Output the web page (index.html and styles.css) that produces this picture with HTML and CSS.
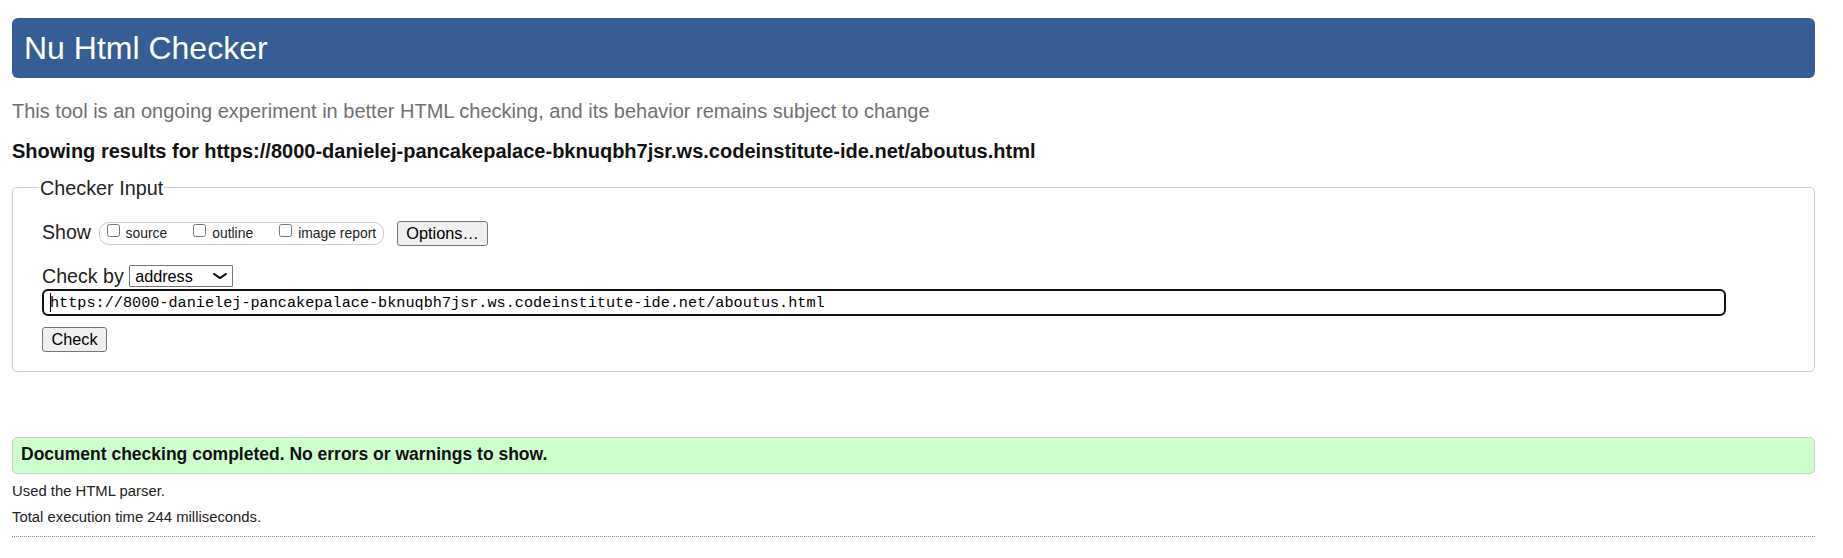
FILE: index.html
```html
<!DOCTYPE html>
<html lang="en">
<head>
<meta charset="utf-8">
<title>Nu Html Checker</title>
<link rel="stylesheet" href="styles.css">
</head>
<body>
<div class="page">
  <h1 class="banner">Nu Html Checker</h1>
  <p class="intro">This tool is an ongoing experiment in better HTML checking, and its behavior remains subject to change</p>
  <p class="results-for">Showing results for https://8000-danielej-pancakepalace-bknuqbh7jsr.ws.codeinstitute-ide.net/aboutus.html</p>
  <form class="checker">
    <fieldset class="checker-fieldset">
      <legend class="checker-legend">Checker Input</legend>
      <div class="row row-show">
        <span class="row-label show-label">Show</span>
        <span class="show-group">
          <label class="opt"><input type="checkbox" class="cb"><span class="opt-text">source</span></label>
          <label class="opt"><input type="checkbox" class="cb"><span class="opt-text">outline</span></label>
          <label class="opt opt-last"><input type="checkbox" class="cb"><span class="opt-text">image report</span></label>
        </span>
        <button type="button" class="btn btn-options">Options…</button>
      </div>
      <div class="row row-checkby">
        <span class="row-label">Check by</span>
        <span class="select-wrap">
          <select class="select"><option>address</option><option>file upload</option><option>text input</option></select>
          <svg class="chevron" width="14" height="6" viewBox="0 0 14 6"><path d="M1 0.9 L7 5.1 L13 0.9" fill="none" stroke="#111" stroke-width="1.9" stroke-linecap="round" stroke-linejoin="round"/></svg>
        </span>
      </div>
      <div class="url-wrap">
        <input class="url" type="text" value="https://8000-danielej-pancakepalace-bknuqbh7jsr.ws.codeinstitute-ide.net/aboutus.html">
        <span class="caret"></span>
      </div>
      <div class="submit-row"><button type="button" class="btn btn-check">Check</button></div>
    </fieldset>
  </form>
  <p class="success">Document checking completed. No errors or warnings to show.</p>
  <p class="meta meta-first">Used the HTML parser.</p>
  <p class="meta">Total execution time 244 milliseconds.</p>
  <hr class="dotted">
</div>
</body>
</html>
```
FILE: styles.css
```css
* { box-sizing: border-box; }
html, body { margin: 0; padding: 0; background: #fff; }
body {
  font-family: "Liberation Sans", Arial, sans-serif;
  color: #222;
}
.page { padding: 18px 28px 0 12px; }

.banner {
  margin: 0;
  height: 60px;
  padding-left: 12px;
  background: #365d95;
  color: #fff;
  border-radius: 6px;
  font-size: 32px;
  font-weight: normal;
  line-height: 60px;
}

.intro {
  margin: 20.5px 0 0;
  font-size: 20px;
  line-height: 24px;
  color: #707070;
}

.results-for {
  margin: 16px 0 0;
  font-size: 20px;
  line-height: 24px;
  font-weight: bold;
  color: #111;
}

.checker { margin: 0; }

.checker-fieldset {
  margin: 14px 0 0;
  min-width: 0;
  padding: 21.5px 29px 19px;
  border: 1px solid #cccccc;
  border-radius: 5px;
}

.checker-legend {
  margin-left: -3px;
  padding: 0 1px;
  font-size: 19.8px;
  line-height: 22px;
  color: #222;
}

.row {
  display: flex;
  align-items: center;
}
.row-show { height: 26px; }
.row-checkby { height: 23px; margin-top: 18px; }

.row-label {
  font-size: 19.6px;
  line-height: 22px;
  color: #222;
}
.show-label { margin-right: 8px; margin-bottom: 2px; }

.show-group {
  display: flex;
  align-items: flex-start;
  height: 23px;
  padding: 0 7px 0 6.5px;
  border: 1px solid #cccccc;
  border-radius: 10px;
}
.opt {
  display: flex;
  align-items: flex-start;
  margin-right: 26px;
}
.opt-last { margin-right: 0; }
.cb {
  width: 13px;
  height: 13px;
  margin: 1.3px 6px 0 0;
}
.opt-text {
  font-size: 13.9px;
  line-height: 21px;
  color: #222;
}

.btn {
  height: 25px;
  padding: 2px 8.5px;
  font-family: "Liberation Sans", Arial, sans-serif;
  font-size: 16.3px;
  line-height: 19px;
  color: #000;
  background: #efefef;
  border: 1px solid #767676;
  border-radius: 3px;
}
.btn-options { margin-left: 12.7px; }

.select-wrap {
  position: relative;
  display: block;
  margin-left: 5.5px;
}
.select {
  display: block;
  -webkit-appearance: none;
  appearance: none;
  width: 104px;
  height: 22px;
  margin: 0;
  padding: 0 0 0 5px;
  font-family: "Liberation Sans", Arial, sans-serif;
  font-size: 16.2px;
  color: #000;
  background: #fff;
  border: 1px solid #767676;
  border-radius: 1px;
}
.chevron {
  position: absolute;
  left: 84px;
  top: 8.4px;
  overflow: visible;
  pointer-events: none;
}

.url-wrap {
  position: relative;
  margin-top: 2px;
}
.url {
  display: block;
  width: 1684px;
  height: 27px;
  margin: 0;
  padding: 0 6px;
  font-family: "Liberation Mono", "DejaVu Sans Mono", monospace;
  font-size: 15.2px;
  color: #000;
  background: #fff;
  border: 2px solid #101010;
  border-radius: 6px;
  outline: none;
}
.caret {
  position: absolute;
  left: 7.7px;
  top: 4px;
  width: 1.5px;
  height: 19px;
  background: #000;
}

.submit-row { margin-top: 11px; }

.success {
  margin: 64.5px 0 0;
  padding: 6px 8px 8px;
  font-size: 17.5px;
  line-height: 21px;
  font-weight: bold;
  color: #111;
  background: #ccffcc;
  border: 1px solid #cccccc;
  border-radius: 5px;
}

.meta {
  margin: 8.4px 0 0;
  font-size: 14.85px;
  line-height: 18px;
  color: #222;
}
.meta-first { margin-top: 8.5px; }

.dotted {
  margin: 9.4px 0 0;
  height: 0;
  border: 0;
  border-top: 1px dotted #888;
}
```
